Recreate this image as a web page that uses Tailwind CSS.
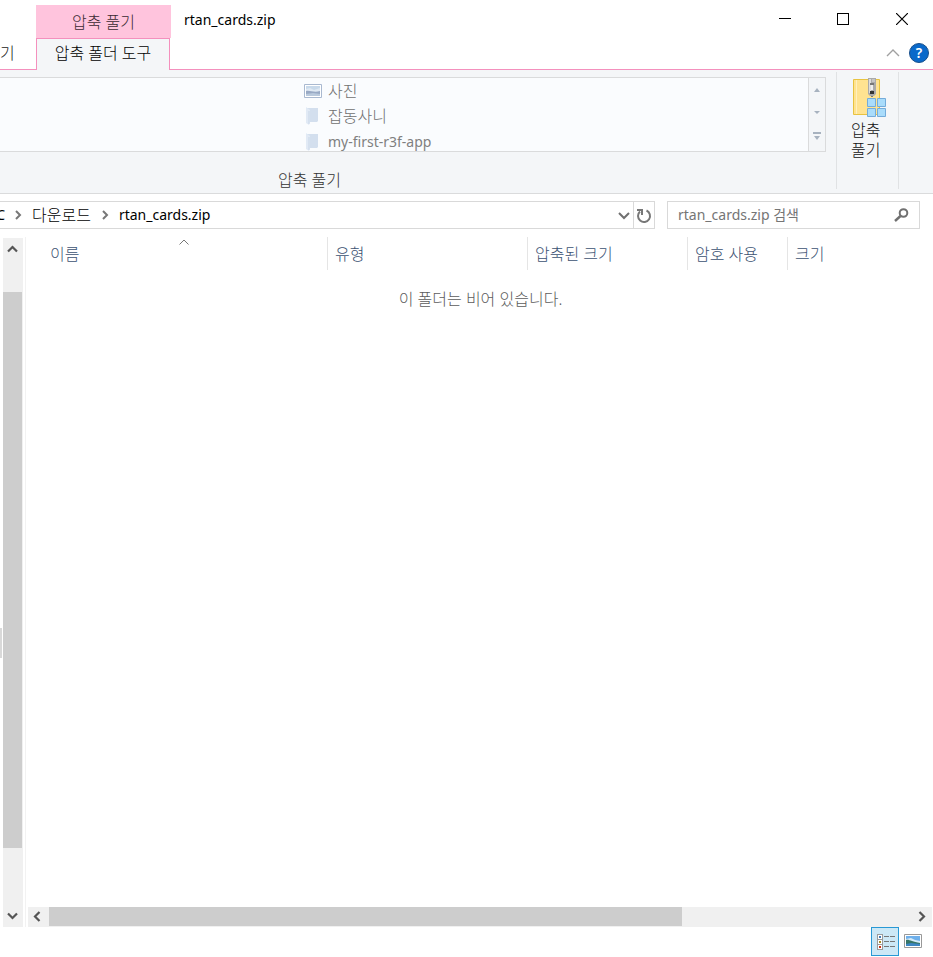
<!DOCTYPE html>
<html lang="ko">
<head>
<meta charset="utf-8">
<meta name="viewport" content="width=device-width, initial-scale=1">
<title>rtan_cards.zip</title>
<script src="https://cdn.jsdelivr.net/npm/@tailwindcss/browser@4"></script>
</head>
<body class="flex h-screen flex-col overflow-hidden bg-white font-['Noto_Sans','Noto_Sans_CJK_KR',sans-serif] text-base leading-5 font-light text-black">

<!-- Title bar and ribbon tabs -->
<header class="flex shrink-0 border-b border-[#f490bd]">
  <button class="w-9 overflow-hidden self-end pb-1.5 text-left leading-5 text-[#222]">기</button>
  <div class="-mb-px flex w-[135px] flex-col pt-[5px]">
    <div class="flex h-[33px] items-center justify-center bg-[#ffc4dd] text-[#3a2a32]">압축 풀기</div>
    <button class="mr-px h-8 border border-b-0 border-[#f490bd] bg-[#f4f6f8] pb-1 text-black">압축 폴더 도구</button>
  </div>
  <div class="flex min-w-0 flex-1 flex-col">
    <div class="flex h-[38px] items-center">
      <h1 class="flex-1 pt-0.5 pl-[13px] text-sm font-normal">rtan_cards.zip</h1>
      <button aria-label="최소화" class="grid h-full w-[58px] place-items-center"><svg width="12" height="12" shape-rendering="crispEdges"><path d="M0 5.5H12" stroke="#000"/></svg></button>
      <button aria-label="최대화" class="grid h-full w-[58px] place-items-center"><svg width="12" height="12" fill="none" shape-rendering="crispEdges"><path d="M.5 .5h11v11h-11z" stroke="#000"/></svg></button>
      <button aria-label="닫기" class="mr-px grid h-full w-[60px] place-items-center"><svg width="12" height="12"><path d="M0 0L12 12M12 0L0 12" stroke="#000" stroke-width="1.2"/></svg></button>
    </div>
    <div class="flex flex-1 items-center justify-end gap-[9px] pr-1 pb-0.5">
      <button aria-label="리본 최소화"><svg width="14" height="8" fill="none"><path d="M1 7L7 1L13 7" stroke="#a0a0a0" stroke-width="1.4"/></svg></button>
      <button aria-label="도움말" class="grid h-5 w-5 place-items-center rounded-full border border-[#174f8b] bg-[#0969ca] text-sm leading-4 font-semibold text-white">?</button>
    </div>
  </div>
</header>

<!-- Ribbon -->
<section class="flex h-[124px] shrink-0 border-b border-[#dadbdc] bg-[#f4f6f8] pt-0.5">
  <div class="flex min-w-0 flex-1 flex-col pt-[5px] pr-2.5">
    <div class="flex h-[75px]">
      <ul class="min-w-0 flex-1 overflow-hidden border-y border-[#dadbdc] bg-[#fafcfe] pl-[304px] text-[#707070]">
        <li class="flex h-[25px] items-center gap-1.5">
          <svg width="18" height="14"><path d="M.5 .5h17v13H.5z" fill="#fff" stroke="#a9b9d0"/><path d="M2 2h14v10H2z" fill="#c8d9ea"/><path d="M2 5l4-1 4 2 6-2v4H2z" fill="#dfe9f3"/><path d="M2 7c4-1 8 2 14 0v5H2z" fill="#98a9c4"/><path d="M2 10l7-1 7 1v2H2z" fill="#b9c9dc"/></svg>사진</li>
        <li class="flex h-[26px] items-center gap-1.5">
          <svg width="18" height="18"><path d="M3 1h11v13l-1 1H3z" fill="#d3dfee"/><path d="M2 0l4 3v12l-1 3-3-2z" fill="#e1eaf5"/><path d="M5 4v13" stroke="#c9d7e8"/></svg>잡동사니</li>
        <li class="flex h-[26px] items-center gap-1.5">
          <svg width="18" height="18"><path d="M3 1h11v13l-1 1H3z" fill="#d3dfee"/><path d="M2 0l4 3v12l-1 3-3-2z" fill="#e1eaf5"/><path d="M5 4v13" stroke="#c9d7e8"/></svg><span class="text-sm font-normal text-[#808080]">my-first-r3f-app</span></li>
      </ul>
      <div class="flex w-[18px] flex-col border border-[#dadbdc]">
        <button aria-label="위로" class="grid flex-1 place-items-center"><svg width="6" height="4"><path d="M3 0L6 4H0z" fill="#a7b2bf"/></svg></button>
        <button aria-label="아래로" class="grid flex-1 place-items-center"><svg width="6" height="3"><path d="M0 0H6L3 3z" fill="#a7b2bf"/></svg></button>
        <button aria-label="자세히" class="grid flex-1 place-items-center pb-1"><svg width="8" height="8"><path d="M0 0h8v2H0zM1 4h6L4 8z" fill="#a7b2bf"/></svg></button>
      </div>
    </div>
    <div class="mt-[18px] pl-[278px] text-[#333]">압축 풀기</div>
  </div>
  <button class="mb-1 flex w-[63px] flex-col items-start border-x border-[#e0e2e4] pt-1.5 pl-3.5 text-[#111]">
    <svg width="34" height="40" class="mb-0.5 ml-0.5">
      <path d="M.5 1.5h26v35H.5z" fill="#ffe391" stroke="#e8c341"/><path d="M3.500 2v34" stroke="#fff0bd"/>
      <path d="M15 0h8v16l-2 2h-4l-2-2z" fill="#aaa"/><path d="M16 1h2v14h-2z" fill="#ddd"/><path d="M19 1h3v3h-3z" fill="#c5c5c5"/><path d="M17 5h4v2h-4z" fill="#777"/><path d="M18 7h2v5h-2z" fill="#eee"/><path d="M17 13h4v3h-4z" fill="#333"/><path d="M19 18v3" stroke="#777" stroke-width="2" stroke-dasharray="1 1"/>
      <path d="M14.500 20.500h8v8h-8zM24.500 20.500h8v8h-8zM14.500 30.500h8v8h-8zM24.500 30.500h8v8h-8z" fill="#a9dcfb" stroke="#74acda"/>
    </svg>
    <span>압축<br>풀기</span>
  </button>
  <div class="w-[34px]"></div>
</section>

<!-- Address and search -->
<div class="flex shrink-0 gap-3 pt-[7px] pr-[13px] pb-2">
  <nav class="flex h-7 min-w-0 flex-1 items-center border border-l-0 border-[#d9d9d9]">
    <a href="#" class="flex w-[5px] justify-end overflow-hidden text-sm font-normal">C</a>
    <svg width="7" height="10" class="ml-2.5" fill="none"><path d="M1 1l4 4-4 4" stroke="#777" stroke-width="2"/></svg>
    <a href="#" class="ml-2.5">다운로드</a>
    <svg width="7" height="10" class="ml-[11px]" fill="none"><path d="M1 1l4 4-4 4" stroke="#777" stroke-width="2"/></svg>
    <a href="#" class="ml-2.5 flex-1 text-sm font-normal">rtan_cards.zip</a>
    <button aria-label="이전 위치" class="grid h-full w-[19px] place-items-center pt-0.5"><svg width="12" height="8" fill="none"><path d="M1 1l5 5 5-5" stroke="#707070" stroke-width="2"/></svg></button>
    <button aria-label="새로 고침" class="grid h-full w-[21px] place-items-center border-l border-[#d9d9d9] pt-px"><svg width="16" height="16" fill="none" stroke="#777" stroke-width="2"><path d="M10.500 2.500A6 6 0 1 1 4 3.500"/><path d="M1 2h5v5"/></svg></button>
  </nav>
  <label class="flex h-7 w-[253px] items-center border border-[#d9d9d9] pr-2.5 pl-2.5">
    <input type="search" aria-label="검색" placeholder="rtan_cards.zip 검색" class="min-w-0 flex-1 text-sm font-normal outline-none placeholder:text-[#757575]">
    <svg width="15" height="14" fill="none" stroke="#707070"><circle cx="9.500" cy="5" r="3.800" stroke-width="2"/><path d="M6.500 8L1 13" stroke-width="2.400"/></svg>
  </label>
</div>

<!-- Navigation scrollbar and file list -->
<main class="flex min-h-0 flex-1">
  <div class="flex w-[3px] flex-col pt-[391px]"><div class="h-[30px] w-0.5 bg-[#d9d9d9]"></div></div>
  <div class="mt-px mb-[30px] flex w-5 flex-col bg-[#f0f0f0]">
    <button aria-label="위로 스크롤" class="mr-px grid h-[22px] place-items-center"><svg width="11" height="8" fill="none"><path d="M1 6.500l4.500-4.500 4.500 4.500" stroke="#555" stroke-width="2.200"/></svg></button>
    <div class="mr-px flex-1 pt-8 pb-[57px]"><div class="h-full bg-[#cdcdcd]"></div></div>
    <button aria-label="아래로 스크롤" class="mr-px grid h-[22px] place-items-center"><svg width="11" height="8" fill="none"><path d="M1 1.500l4.500 4.500 4.500-4.500" stroke="#555" stroke-width="2.200"/></svg></button>
  </div>
  <div class="mb-[30px] ml-0.5 w-px bg-[#f2f2f2]"></div>
  <div class="flex min-w-0 flex-1 flex-col pl-0.5">
    <div class="min-h-0 flex-1">
      <table class="w-full table-fixed border-collapse">
        <thead>
          <tr class="h-[33px] text-left text-[#3c5272] [&>th]:p-0 [&>th]:font-light">
            <th class="w-[300px]"><div class="relative flex h-[33px] items-center border-r border-[#e5e5e5] pl-[22px]">이름<svg width="10" height="6" fill="none" class="absolute top-0.5 left-[151px]"><path d="M.5 5.500L5 1l4.500 4.500" stroke="#777"/></svg></div></th>
            <th class="w-[200px]"><div class="flex h-[33px] items-center border-r border-[#e5e5e5] pl-[7px]">유형</div></th>
            <th class="w-[160px]"><div class="flex h-[33px] items-center border-r border-[#e5e5e5] pl-[7px]">압축된 크기</div></th>
            <th class="w-[100px]"><div class="flex h-[33px] items-center border-r border-[#e5e5e5] pl-[7px]">암호 사용</div></th>
            <th><div class="flex h-[33px] items-center pl-[7px]">크기</div></th>
          </tr>
        </thead>
        <tbody><tr><td colspan="5" class="pt-[19px] text-center text-[#5c5c5c]">이 폴더는 비어 있습니다.</td></tr></tbody>
      </table>
    </div>
    <div class="mr-px flex h-5 bg-[#f0f0f0]">
      <button aria-label="왼쪽으로 스크롤" class="grid w-[21px] place-items-center pr-1 pb-px"><svg width="8" height="11" fill="none"><path d="M6.500 1L2 5.500 6.500 10" stroke="#555" stroke-width="2.200"/></svg></button>
      <div class="flex-1 pb-px"><div class="h-full w-[73.4%] bg-[#cdcdcd]"></div></div>
      <button aria-label="오른쪽으로 스크롤" class="grid w-[21px] place-items-center pb-px"><svg width="8" height="11" fill="none"><path d="M1.500 1L6 5.500 1.500 10" stroke="#555" stroke-width="2.200"/></svg></button>
    </div>
    <div class="flex h-[30px] items-start justify-end gap-[5px] pr-[11px]">
      <button aria-label="자세히 보기" class="grid h-[29px] w-7 place-items-center border border-[#2899d5] bg-[#cce8f6] pl-0.5">
        <svg width="18" height="16" shape-rendering="crispEdges" fill="none"><path d="M.5 .5h5v5h-5zM.5 5.500h5v5h-5zM.5 10.500h5v5h-5z" fill="#fff" stroke="#9b9b9b"/><path d="M2 2h2v2H2z" fill="#3f79b5"/><path d="M2 7h2v2H2z" fill="#a58a25"/><path d="M2 12h2v2H2z" fill="#cc2d12"/><path d="M7 2.500h5M13 2.500h5M7 7.500h5M13 7.500h5M7 12.500h5M13 12.500h5" stroke="#777"/></svg>
      </button>
      <button aria-label="큰 아이콘 보기" class="mt-[7px]"><svg width="18" height="14"><path d="M.5 .5h17v13H.5z" fill="#fff" stroke="#999"/><path d="M2 2h14v10H2z" fill="#6fb0eb"/><path d="M2 5l5-1 4 2 5 1v2H2z" fill="#d6ecfa"/><path d="M2 6c3-1 6 2 14 3v1H2z" fill="#377567"/><path d="M2 10l5-1 9 1v2H2z" fill="#3d86c3"/></svg></button>
    </div>
  </div>
</main>
</body>
</html>
